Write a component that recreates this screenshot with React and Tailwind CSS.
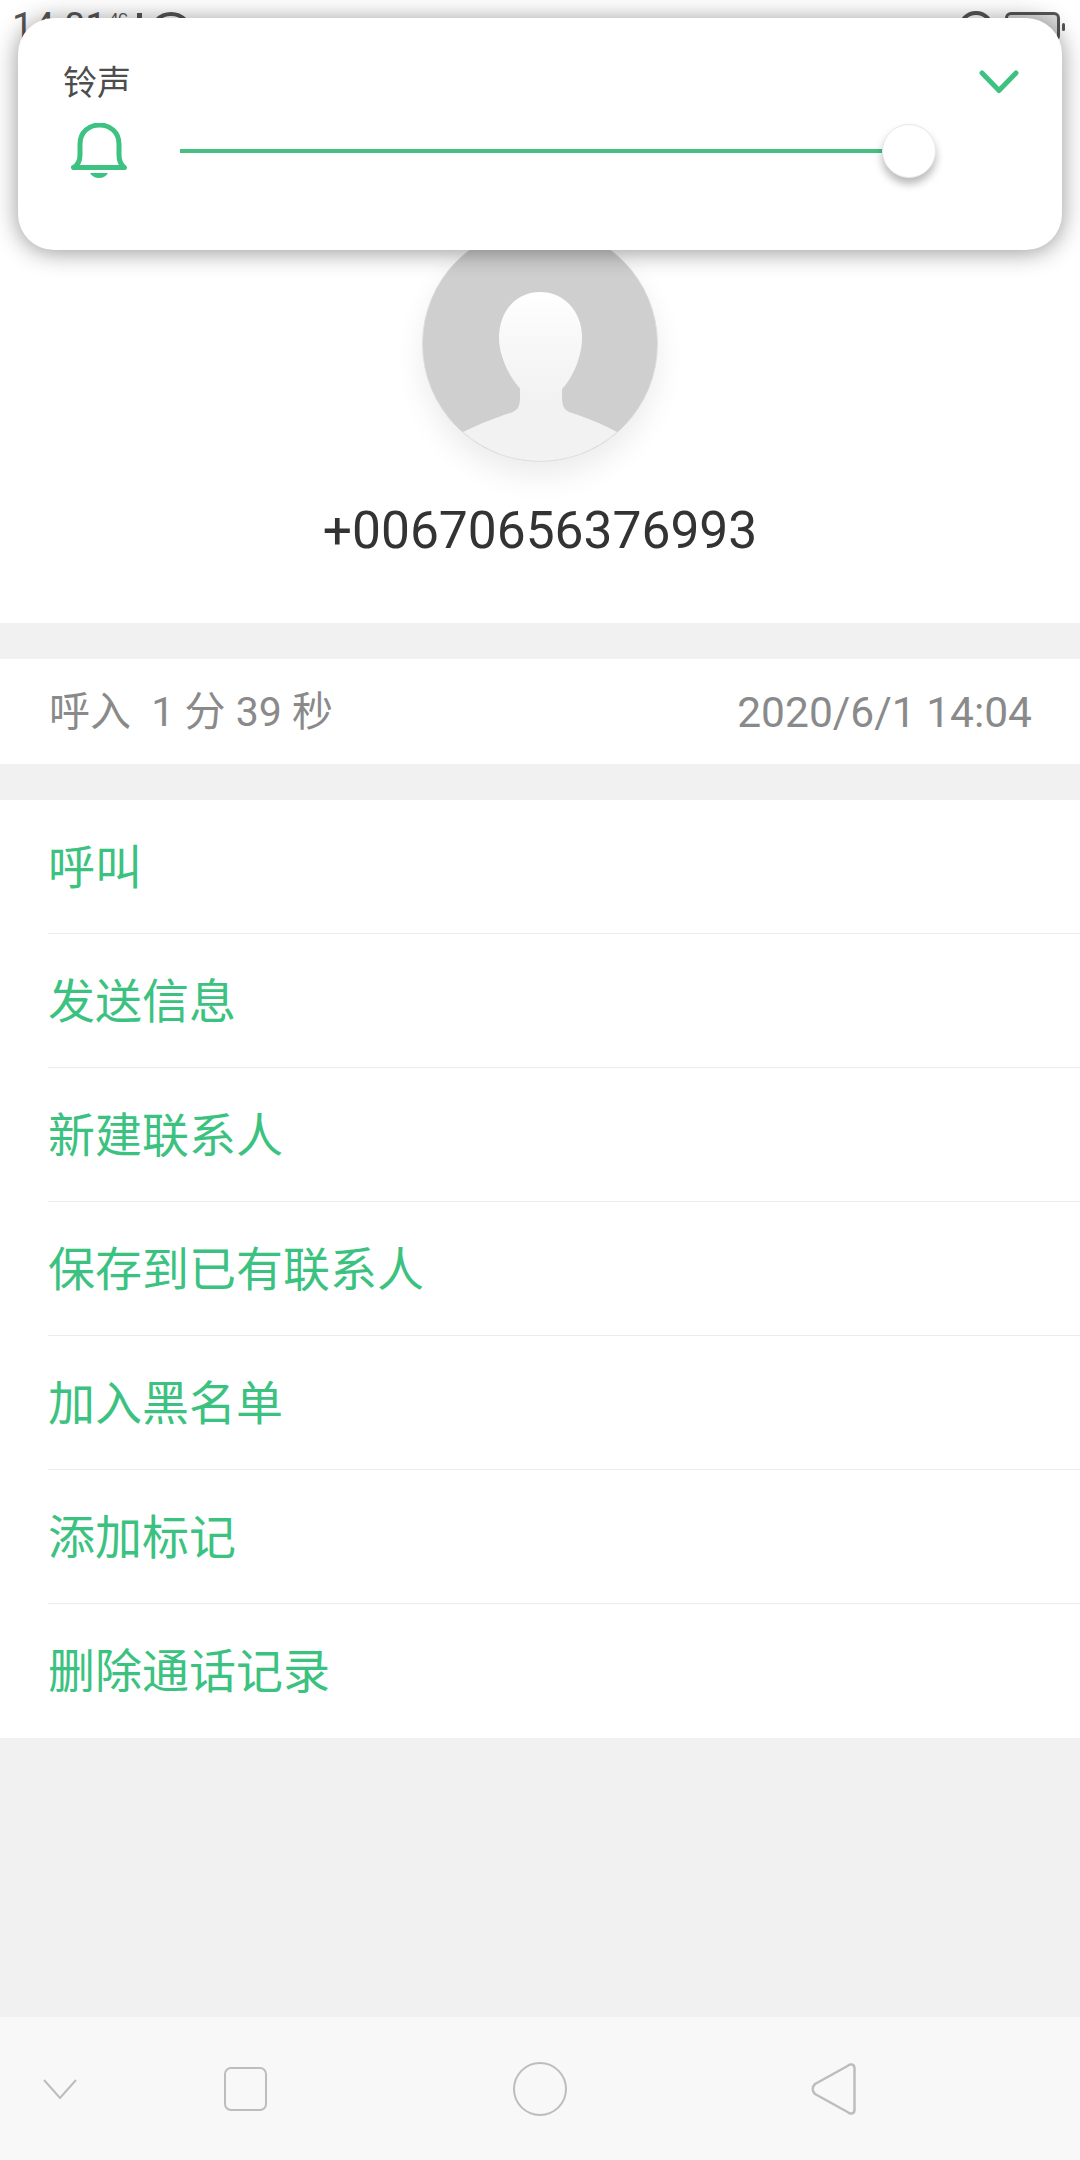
import React from 'react';

const actions = ['呼叫', '发送信息', '新建联系人', '保存到已有联系人', '加入黑名单', '添加标记', '删除通话记录'];

const Bell = () => (
  <svg width="56" height="56" viewBox="0 0 56 56" fill="none">
    <path
      d="M2.5 44.5H53.5C50 42 48 38 48 32V21C48 9 39 2 28.5 2C18 2 9 9 9 21V32C9 38 7 42 2.5 44.5Z"
      stroke="#3dc281"
      strokeWidth="5"
      strokeLinejoin="round"
    />
    <path d="M19 50H37C35 53.5 32 55 28 55C24 55 21 53.5 19 50Z" fill="#3dc281" />
  </svg>
);

const Avatar = () => (
  <div className="w-[236px] h-[236px] rounded-full shadow-[0_14px_30px_rgba(0,0,0,0.08)]">
    <svg width="236" height="236" viewBox="0 0 236 236">
      <defs>
        <linearGradient id="face" x1="0" y1="0" x2="0" y2="1">
          <stop offset="0" stopColor="#ffffff" />
          <stop offset="0.45" stopColor="#f8f8f8" />
          <stop offset="1" stopColor="#f2f2f2" />
        </linearGradient>
      </defs>
      <circle cx="118" cy="118" r="117.5" fill="#cfcfcf" stroke="#dedede" strokeWidth="1" />
      <path
        d="M41 206C60 197 75 191 88 187C95 185 98 181 98 172V150H140V172C140 181 143 185 150 187C163 191 178 197 195 206A117 117 0 0 1 41 206Z"
        fill="#f2f2f2"
      />
      <path
        d="M118 66C141 66 160 84 160 112C160 138 141 174 119 174C99 174 77 138 77 112C77 84 95 66 118 66Z"
        fill="url(#face)"
      />
    </svg>
  </div>
);

const App = () => {
  return (
    <div className="relative w-[1080px] h-[2160px] flex flex-col bg-[#f1f1f1] overflow-hidden font-['Roboto','Noto_Sans_CJK_SC',sans-serif]">
      {/* Status bar, mostly hidden by the ringtone card */}
      <div className="h-[60px] bg-white flex items-start justify-between pl-[12px] pr-[15px] pt-[5px] text-[#555]">
        <div className="flex items-start">
          <span className="text-[38px] leading-[44px]">14:01</span>
          <span className="text-[15px] leading-[18px] ml-[3px] mt-[5px]">4G</span>
          <span className="w-[5px] h-[30px] bg-[#555] ml-[9px] mt-[8px]"></span>
          <span className="w-[44px] h-[44px] rounded-full border-[4px] border-[#555] ml-[7px] mt-[7px]"></span>
        </div>
        <div className="flex items-start">
          <span className="w-[36px] h-[36px] rounded-full border-[4px] border-[#555] mt-[6px] mr-[11px]"></span>
          <span className="w-[55px] h-[30px] rounded-[6px] border-[3px] border-[#555] mt-[7px] bg-[#ddd]"></span>
          <span className="w-[3px] h-[8px] rounded-sm bg-[#555] ml-[2px] mt-[18px]"></span>
        </div>
      </div>

      {/* Ringtone volume card */}
      <div className="absolute left-[18px] top-[18px] w-[1044px] h-[232px] rounded-[36px] bg-white shadow-[0_2px_24px_rgba(0,0,0,0.42)] pl-[45px] pt-[47px] pr-[43px]">
        <div className="flex items-start justify-between">
          <span className="text-[34px] leading-[36px] text-[#4d4d4d]">铃声</span>
          <svg width="40" height="24" viewBox="0 0 40 24" fill="none" className="mt-[5px]">
            <path d="M3 3L20 20.5L37 3" stroke="#3dc281" strokeWidth="5" strokeLinecap="round" strokeLinejoin="round" />
          </svg>
        </div>
        <div className="flex items-center mt-[22px] ml-[8px]">
          <Bell />
          <div className="w-[702px] h-[4px] bg-[#46c082] ml-[53px]"></div>
          <div className="w-[54px] h-[54px] rounded-full bg-white border border-[#e8e8e8] shadow-[0_6px_8px_rgba(0,0,0,0.28)]"></div>
        </div>
      </div>

      {/* Caller */}
      <div className="h-[563px] bg-white flex flex-col items-center pt-[166px]">
        <Avatar />
        <div className="mt-[39px] text-[51.5px] leading-[60px] text-[#333]">+00670656376993</div>
      </div>

      {/* Call info */}
      <div className="mt-[36px] h-[105px] bg-white flex items-center justify-between pl-[49px] pr-[48px] pt-[3px] text-[#8a8a8a]">
        <span className="whitespace-pre text-[41px]">呼入  1 分 39 秒</span>
        <span className="text-[42.5px]">2020/6/1 14:04</span>
      </div>

      {/* Actions */}
      <div className="mt-[36px] bg-white pl-[48px]">
        {actions.map((label, i) => (
          <div
            key={label}
            className={`h-[134px] flex items-center pt-[3px] text-[47px] text-[#3cc280] ${i < actions.length - 1 ? 'border-b border-[#ececec]' : ''}`}
          >
            {label}
          </div>
        ))}
      </div>

      <div className="flex-1"></div>

      {/* Navigation bar */}
      <div className="h-[143px] bg-[#f8f8f8] flex items-center pl-[43px]">
        <svg width="34" height="20" viewBox="0 0 34 20" fill="none">
          <path d="M1 1L17 19L33 1" stroke="#bdbdbd" strokeWidth="2" />
        </svg>
        <div className="w-[43px] h-[44px] rounded-[7px] border-[2.5px] border-[#bdbdbd] ml-[147px]"></div>
        <div className="w-[54px] h-[54px] rounded-full border-[2.5px] border-[#bdbdbd] ml-[246px]"></div>
        <svg width="45" height="52" viewBox="0 0 45 52" fill="none" className="ml-[244px]">
          <path
            d="M36.5 3C38.5 0.5 43.5 0.8 43.5 5V47C43.5 51.2 38.5 51.5 36.5 49L4 31C1 28 1 24 4 21Z"
            stroke="#bdbdbd"
            strokeWidth="2.5"
            strokeLinejoin="round"
          />
        </svg>
      </div>
    </div>
  );
};

export default App;
